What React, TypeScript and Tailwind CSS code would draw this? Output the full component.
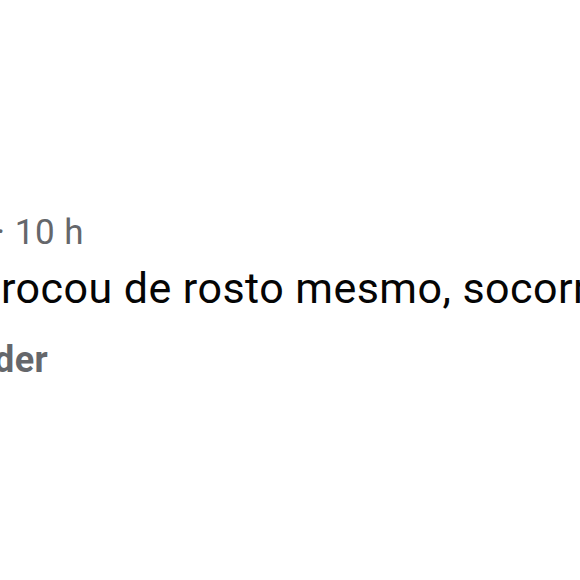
function Clipped({ hidden, children, className }: { hidden: string; children: React.ReactNode; className: string }) {
  // the hidden part sits left of the window edge, the rest flows from x = 0
  return (
    <div className={`flex whitespace-nowrap ${className}`}>
      <span className="w-0 shrink-0 flex justify-end">{hidden}</span>
      {children}
    </div>
  )
}

export default function App() {
  return (
    <div className="w-[580px] h-[580px] overflow-hidden bg-white font-['Roboto',sans-serif]">
      <div className="pt-[212px] flex flex-col">
        {/* Meta */}
        <Clipped hidden="marianasouza_" className="text-[35px] leading-[42px] tracking-[0.5px] text-[#65676b]">
          <span className="-ml-[4px]">· 10 h</span>
        </Clipped>

        {/* Comment */}
        <Clipped hidden="Ela t" className="mt-[8px] text-[43px] leading-[52px] tracking-[0.45px] text-[#050505]">
          <span className="ml-[1px]">rocou de rosto mesmo, socorro 😂</span>
        </Clipped>

        {/* Actions */}
        <Clipped hidden="Respon" className="mt-[24px] text-[36px] leading-[44px] tracking-[0.4px] font-bold text-[#65676b]">
          <span className="-ml-[6px]">der</span>
        </Clipped>
      </div>
    </div>
  )
}
